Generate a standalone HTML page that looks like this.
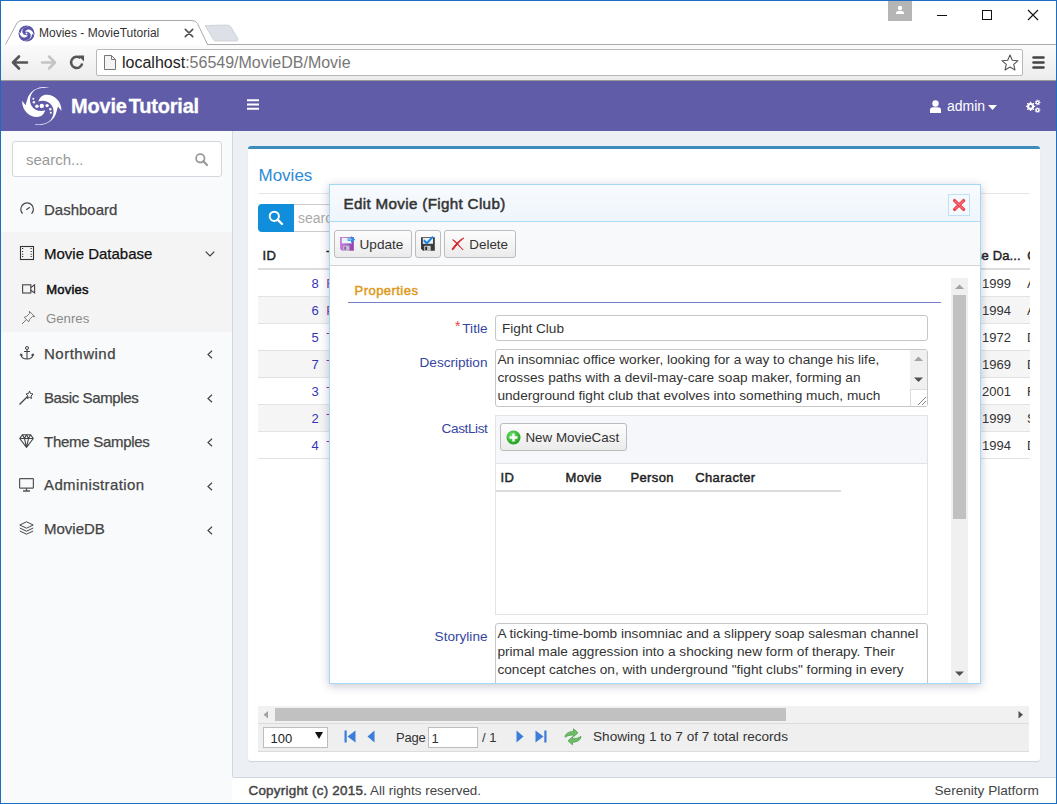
<!DOCTYPE html>
<html><head><meta charset="utf-8">
<style>
*{box-sizing:border-box;margin:0;padding:0}
html,body{width:1057px;height:804px;overflow:hidden;background:#fff}
body{position:relative;font-family:"Liberation Sans",sans-serif;color:#333}
.a{position:absolute}
.t{position:absolute;line-height:1;white-space:nowrap}
svg{position:absolute;overflow:visible}
</style></head><body>

<!-- ============ CHROME ============ -->
<div class="a" style="left:0;top:0;width:1057px;height:45px;background:#fff"></div>
<!-- tab -->
<svg style="left:0;top:0" width="260" height="46">
  <path d="M5.5 44.5 L17 23 Q19 20.5 22 20.5 L192 20.5 Q196 20.5 197.5 23.5 L207.5 44.5" fill="#fff" stroke="#a9a9a9" stroke-width="1"/>
  <path d="M207 44.5 L1057 44.5" stroke="#a9a9a9"/>
  <path d="M206 25.5 Q204 25 206 27 L214 40.5 Q215 41 217 41 L236 41 Q239 41 237.5 38 L231 27 Q229.5 25 227 25 Z" fill="#dde1e7" stroke="#c9cdd3" stroke-width="0.8"/>
</svg>
<!-- favicon -->
<svg style="left:17.5px;top:25px" width="17" height="17" viewBox="0 0 17 17"><circle cx="8.5" cy="8.5" r="8" fill="#5b55a9"/><g transform="translate(8.5 8.5) scale(0.36) translate(-23.8 -21.9)"><use href="#sw"/><use href="#sw" transform="rotate(180 23.8 21.9)"/><circle cx="23.8" cy="21.9" r="2.6" fill="#fff"/></g></svg>
<div class="t" style="left:39px;top:27px;font-size:12px;color:#333">Movies - MovieTutorial</div>
<svg style="left:184px;top:28px" width="10" height="10"><path d="M1.3 1.3 L8.7 8.7 M8.7 1.3 L1.3 8.7" stroke="#555" stroke-width="1.7" stroke-linecap="round"/></svg>

<!-- window controls -->
<div class="a" style="left:888px;top:1px;width:24px;height:20px;background:#b5b5b5"></div>
<svg style="left:894px;top:4px" width="12" height="12"><circle cx="6" cy="3.9" r="2.2" fill="#fff"/><path d="M1.8 10.1 Q1.8 6.8 6 6.8 Q10.2 6.8 10.2 10.1Z" fill="#fff"/></svg>
<div class="a" style="left:937px;top:15px;width:10px;height:1px;background:#111"></div>
<div class="a" style="left:982px;top:10px;width:10px;height:10px;border:1px solid #111"></div>
<svg style="left:1028px;top:10px" width="10" height="10"><path d="M0 0 L10 10 M10 0 L0 10" stroke="#111" stroke-width="1.1"/></svg>

<!-- toolbar -->
<div class="a" style="left:0;top:45px;width:1057px;height:35px;background:linear-gradient(#fbfbfb,#ececec)"></div>
<div class="a" style="left:0;top:80px;width:1057px;height:1px;background:#9a9a9a"></div>
<!-- back -->
<svg style="left:11px;top:55px" width="17" height="15"><path d="M8 1.5 L2 7.5 L8 13.5 M2.5 7.5 L16 7.5" fill="none" stroke="#555" stroke-width="2.6" stroke-linecap="round" stroke-linejoin="round"/></svg>
<svg style="left:40px;top:55px" width="17" height="15"><path d="M9 1.5 L15 7.5 L9 13.5 M14.5 7.5 L2 7.5" fill="none" stroke="#c4c4c4" stroke-width="2.5" stroke-linecap="round" stroke-linejoin="round"/></svg>
<svg style="left:69px;top:54px" width="17" height="17"><path d="M13.2 9.5 A5.6 5.6 0 1 1 11.5 4.2" fill="none" stroke="#555" stroke-width="2.5"/><path d="M9 1.5 L15 1.5 L15 7.5Z" fill="#555"/></svg>
<!-- address bar -->
<div class="a" style="left:96px;top:49px;width:927px;height:27px;background:#fff;border:1px solid #b9b9b9;border-radius:2px"></div>
<svg style="left:104px;top:55px" width="12" height="15"><path d="M0.5 0.5 L7.5 0.5 L11.5 4.5 L11.5 14.5 L0.5 14.5Z" fill="#f4f4f4" stroke="#777"/><path d="M7.5 0.5 L7.5 4.5 L11.5 4.5" fill="none" stroke="#777"/></svg>
<div class="t" style="left:122px;top:54.5px;font-size:16px;color:#222">localhost<span style="color:#777">:56549/MovieDB/Movie</span></div>
<svg style="left:1001px;top:54px" width="18" height="17"><path d="M9 1 L11.3 6.2 L17 6.7 L12.7 10.4 L14 16 L9 13 L4 16 L5.3 10.4 L1 6.7 L6.7 6.2Z" fill="none" stroke="#555" stroke-width="1.1" stroke-linejoin="round"/></svg>
<svg style="left:1032px;top:56px" width="13" height="13"><path d="M1.5 1.5 H11.5 M1.5 6.5 H11.5 M1.5 11.5 H11.5" stroke="#444" stroke-width="2.6" stroke-linecap="round"/></svg>

<!-- ============ NAVBAR ============ -->
<div class="a" style="left:1px;top:81px;width:1055px;height:50px;background:#605ca8"></div>
<svg style="left:18px;top:84px" width="48" height="44" viewBox="0 0 48 44">
  <g id="sw"><path d="M31.5 3.8 C24 1.2 14 4.5 10.3 12.5 C9 15.5 8.5 18.5 7.6 21.2 L4.1 16.8 C4 26 10.5 33 19 33 C23 33 26 30.5 27.2 26.3 C22 28.2 16.5 26.2 13.8 22.2 C11 18 11.5 11.5 15.5 7.3 C19.5 3.6 25 3.4 31.5 3.8Z" fill="#fff"/></g>
  <use href="#sw" transform="rotate(180 23.8 21.9)"/>
  <circle cx="23.8" cy="21.9" r="2.2" fill="#fff"/><circle cx="18.9" cy="22.2" r="1.8" fill="#fff"/><circle cx="29.1" cy="21.6" r="1.7" fill="#fff"/>
  <circle cx="15.9" cy="18.3" r="1.2" fill="#fff"/><circle cx="15.3" cy="14.8" r="1" fill="#fff"/><circle cx="32.3" cy="25.2" r="1.2" fill="#fff"/><circle cx="32.8" cy="28.7" r="1" fill="#fff"/>
</svg>
<div class="t" style="left:71px;top:96px;font-size:20px;font-weight:bold;color:#fff;letter-spacing:-0.2px;-webkit-text-stroke:0.3px #fff"><span style="margin-right:2px">Movie</span>Tutorial</div>
<svg style="left:247px;top:99px" width="12" height="11"><path d="M0 1.2 H12 M0 5.5 H12 M0 9.8 H12" stroke="#fff" stroke-width="2"/></svg>
<svg style="left:930px;top:99.5px" width="11" height="13"><circle cx="5.5" cy="3.5" r="3.2" fill="#fff"/><path d="M0 13 L0 10 Q0 7.3 3 7.3 L8 7.3 Q11 7.3 11 10 L11 13Z" fill="#fff"/></svg>
<div class="t" style="left:947px;top:98.5px;font-size:14px;color:#fff">admin</div>
<svg style="left:988px;top:105px" width="9" height="6"><path d="M0 0 H9 L4.5 5Z" fill="#fff"/></svg>
<svg style="left:1026px;top:99px" width="15" height="15" viewBox="0 0 15 15"><path fill-rule="evenodd" d="M8.13 6.70 L9.27 6.85 L9.27 7.95 L8.13 8.10 L7.59 9.40 L8.29 10.31 L7.51 11.09 L6.60 10.39 L5.30 10.93 L5.15 12.07 L4.05 12.07 L3.90 10.93 L2.60 10.39 L1.69 11.09 L0.91 10.31 L1.61 9.40 L1.07 8.10 L-0.07 7.95 L-0.07 6.85 L1.07 6.70 L1.61 5.40 L0.91 4.49 L1.69 3.71 L2.60 4.41 L3.90 3.87 L4.05 2.73 L5.15 2.73 L5.30 3.87 L6.60 4.41 L7.51 3.71 L8.29 4.49 L7.59 5.40Z M6.00 7.40 A1.4 1.4 0 1 0 3.20 7.40 A1.4 1.4 0 1 0 6.00 7.40Z M13.65 3.03 L14.47 3.11 L14.47 3.89 L13.65 3.97 L13.24 4.81 L13.70 5.50 L13.09 5.99 L12.51 5.39 L11.60 5.60 L11.34 6.39 L10.58 6.22 L10.69 5.39 L9.96 4.81 L9.18 5.10 L8.84 4.40 L9.55 3.97 L9.55 3.03 L8.84 2.60 L9.18 1.90 L9.96 2.19 L10.69 1.61 L10.58 0.78 L11.34 0.61 L11.60 1.40 L12.51 1.61 L13.09 1.01 L13.70 1.50 L13.24 2.19Z M12.40 3.50 A0.8 0.8 0 1 0 10.80 3.50 A0.8 0.8 0 1 0 12.40 3.50Z M13.65 10.63 L14.47 10.71 L14.47 11.49 L13.65 11.57 L13.24 12.41 L13.70 13.10 L13.09 13.59 L12.51 12.99 L11.60 13.20 L11.34 13.99 L10.58 13.82 L10.69 12.99 L9.96 12.41 L9.18 12.70 L8.84 12.00 L9.55 11.57 L9.55 10.63 L8.84 10.20 L9.18 9.50 L9.96 9.79 L10.69 9.21 L10.58 8.38 L11.34 8.21 L11.60 9.00 L12.51 9.21 L13.09 8.61 L13.70 9.10 L13.24 9.79Z M12.40 11.10 A0.8 0.8 0 1 0 10.80 11.10 A0.8 0.8 0 1 0 12.40 11.10Z" fill="#fff"/></svg>

<!-- ============ SIDEBAR ============ -->
<div class="a" style="left:1px;top:131px;width:231px;height:672px;background:#f9fafc"></div>
<div class="a" style="left:232px;top:131px;width:1px;height:646px;background:#d2d6de"></div>
<div class="a" style="left:1px;top:232px;width:231px;height:100px;background:#f4f4f5"></div>
<div class="a" style="left:12px;top:141px;width:210px;height:36px;background:#fff;border:1px solid #d2d6de;border-radius:3px"></div>
<div class="t" style="left:26px;top:152px;font-size:15px;color:#999">search...</div>
<svg style="left:195px;top:153px" width="13" height="13"><circle cx="5.3" cy="5.3" r="4.2" fill="none" stroke="#999" stroke-width="1.8"/><path d="M8.3 8.3 L12 12" stroke="#999" stroke-width="2.2" stroke-linecap="round"/></svg>

<!-- Dashboard -->
<svg style="left:19px;top:201px" width="16" height="16" viewBox="0 0 16 16"><path d="M3.6 12.6 A6.3 6.3 0 1 1 12.6 12.6" fill="none" stroke="#444" stroke-width="1.2"/><path d="M7.6 8.4 L10.5 6.6" stroke="#444" stroke-width="1.2" stroke-linecap="round"/></svg>
<div class="t" style="left:44px;top:202px;font-size:15px;color:#444;-webkit-text-stroke:0.25px #444">Dashboard</div>

<!-- Movie Database -->
<svg style="left:20px;top:246px" width="14" height="14" viewBox="0 0 14 14"><rect x="0.5" y="0.5" width="13" height="13" fill="none" stroke="#333" stroke-width="1.1"/><path d="M2.6 2 V3 M2.6 5 V6 M2.6 7.7 V8.7 M2.6 10.1 V11.1 M11.2 2 V3 M11.2 5 V6 M11.2 7.7 V8.7 M11.2 10.1 V11.1" stroke="#333" stroke-width="1.2"/></svg>
<div class="t" style="left:44px;top:246.3px;font-size:15px;color:#111;-webkit-text-stroke:0.25px #111">Movie Database</div>
<svg style="left:205px;top:251px" width="10" height="6"><path d="M0.7 0.7 L5 5 L9.3 0.7" fill="none" stroke="#444" stroke-width="1.2"/></svg>

<svg style="left:22px;top:284px" width="14" height="11" viewBox="0 0 14 11"><rect x="0.6" y="0.8" width="8.2" height="8.2" fill="none" stroke="#444" stroke-width="1.1"/><path d="M8.8 3.5 L12.6 0.8 V9 L8.8 6.3" fill="none" stroke="#444" stroke-width="1.1"/></svg>
<div class="t" style="left:46.3px;top:283.2px;font-size:13px;color:#111;-webkit-text-stroke:0.5px #111;letter-spacing:0.2px">Movies</div>
<svg style="left:21px;top:310px" width="15" height="15" viewBox="0 0 15 15"><path d="M1 14 L5.3 9.7" stroke="#777" stroke-width="1"/><path d="M3.2 7.3 L5.6 6.4 L8.6 3.4 L8.3 1.2 L13.8 6.7 L11.6 6.4 L8.6 9.4 L7.7 11.8Z" fill="none" stroke="#777" stroke-width="1" stroke-linejoin="round"/></svg>
<div class="t" style="left:46px;top:311.5px;font-size:13.2px;color:#8a8a8a">Genres</div>

<!-- other groups -->
<svg style="left:20px;top:346px" width="14" height="14" viewBox="0 0 14 14"><circle cx="7" cy="2" r="1.5" fill="none" stroke="#444"/><path d="M7 3.5 V13 M4 5.5 H10 M1 8.5 Q1.5 13 7 13 Q12.5 13 13 8.5 M0 9.5 L1 8 L2.5 9.5 M11.5 9.5 L13 8 L14 9.5" fill="none" stroke="#444" stroke-width="1.1"/></svg>
<div class="t" style="left:44px;top:345.6px;font-size:15px;color:#444;-webkit-text-stroke:0.25px #444;letter-spacing:0.5px">Northwind</div>
<svg style="left:207px;top:350px" width="6" height="9"><path d="M5 0.7 L1 4.5 L5 8.3" fill="none" stroke="#444" stroke-width="1.2"/></svg>

<svg style="left:19px;top:390px" width="15" height="15" viewBox="0 0 15 15"><path d="M0.5 14.5 L8.5 6.5" stroke="#444" stroke-width="1.2"/><path d="M10.5 1 L11.5 3.5 L14 4 L12 6 L12.5 8.5 L10.5 7.3 L8.5 8.5 L9 6 L7 4 L9.5 3.5Z" fill="none" stroke="#444" stroke-width="1"/></svg>
<div class="t" style="left:44px;top:389.8px;font-size:15px;color:#444;-webkit-text-stroke:0.25px #444;letter-spacing:-0.38px">Basic Samples</div>
<svg style="left:207px;top:394px" width="6" height="9"><path d="M5 0.7 L1 4.5 L5 8.3" fill="none" stroke="#444" stroke-width="1.2"/></svg>

<svg style="left:19px;top:434px" width="15" height="14" viewBox="0 0 15 14"><path d="M3.5 0.7 H11.5 L14.3 4.5 L7.5 13.3 L0.7 4.5Z M0.7 4.5 H14.3 M3.5 0.7 L5.5 4.5 L7.5 13.3 L9.5 4.5 L11.5 0.7 M5.5 4.5 L7.5 0.7 L9.5 4.5" fill="none" stroke="#444" stroke-width="1.1" stroke-linejoin="round"/></svg>
<div class="t" style="left:44px;top:433.7px;font-size:15px;color:#444;-webkit-text-stroke:0.25px #444;letter-spacing:-0.28px">Theme Samples</div>
<svg style="left:207px;top:438px" width="6" height="9"><path d="M5 0.7 L1 4.5 L5 8.3" fill="none" stroke="#444" stroke-width="1.2"/></svg>

<svg style="left:19px;top:478px" width="15" height="14" viewBox="0 0 15 14"><rect x="0.6" y="0.6" width="13.8" height="9.5" rx="0.5" fill="none" stroke="#555" stroke-width="1.2"/><path d="M7.5 10 V12.5 M4 13 H11" stroke="#555" stroke-width="1.3"/></svg>
<div class="t" style="left:44px;top:477.3px;font-size:15px;color:#444;-webkit-text-stroke:0.25px #444;letter-spacing:0.38px">Administration</div>
<svg style="left:207px;top:482px" width="6" height="9"><path d="M5 0.7 L1 4.5 L5 8.3" fill="none" stroke="#444" stroke-width="1.2"/></svg>

<svg style="left:19px;top:521px" width="15" height="15" viewBox="0 0 15 15"><path d="M7.5 0.8 L14.2 4 L7.5 7.2 L0.8 4Z" fill="none" stroke="#444" stroke-width="1"/><path d="M0.8 7 L7.5 10.2 L14.2 7 M0.8 10 L7.5 13.2 L14.2 10" fill="none" stroke="#444" stroke-width="1"/></svg>
<div class="t" style="left:44px;top:521.3px;font-size:15px;color:#444;-webkit-text-stroke:0.25px #444">MovieDB</div>
<svg style="left:207px;top:526px" width="6" height="9"><path d="M5 0.7 L1 4.5 L5 8.3" fill="none" stroke="#444" stroke-width="1.2"/></svg>


<!-- ============ CONTENT ============ -->
<div class="a" style="left:233px;top:131px;width:823px;height:646px;background:#ecf0f5"></div>
<div class="a" style="left:248px;top:146px;width:792px;height:615px;background:#fff;border-top:3px solid #3c8dbc;border-radius:3px;box-shadow:0 1px 1px rgba(0,0,0,0.12)"></div>
<div class="t" style="left:258.5px;top:167.4px;font-size:17px;color:#2e8bd6">Movies</div>
<div class="a" style="left:258px;top:193px;width:772px;height:1px;background:#e6e6e6"></div>
<div class="a" style="left:258px;top:204px;width:36px;height:28px;background:#108ddb;border-radius:4px 0 0 4px"></div>
<svg style="left:268px;top:210px" width="16" height="16"><circle cx="6.3" cy="6.3" r="4.6" fill="none" stroke="#fff" stroke-width="2"/><path d="M9.6 9.6 L14 14" stroke="#fff" stroke-width="2.4" stroke-linecap="round"/></svg>
<div class="a" style="left:294px;top:204px;width:100px;height:28px;background:#fff;border:1px solid #ccc;border-left:0"></div>
<div class="t" style="left:298px;top:211px;font-size:14px;color:#aaa">search</div>

<!-- grid -->
<div class="t" style="left:262.5px;top:249px;font-size:13px;color:#222;-webkit-text-stroke:0.45px #222;letter-spacing:0.35px">ID</div>
<div class="t" style="left:326.3px;top:249px;font-size:13px;color:#222;-webkit-text-stroke:0.45px #222;letter-spacing:0.35px">Title</div>
<div class="a" style="left:944px;top:249px;width:86px;height:16px;overflow:hidden"><div class="t" style="left:31px;top:0;font-size:13px;color:#222;-webkit-text-stroke:0.45px #222;letter-spacing:0.1px">se Da...</div><div class="t" style="left:83.2px;top:0;font-size:13px;color:#222;-webkit-text-stroke:0.45px #222">C</div></div>
<div class="a" style="left:258px;top:268px;width:772px;height:2px;background:#ddd"></div>
<div id="rows"></div>
<div class="a" style="left:258px;top:270px;width:772px;height:26px;background:#fff"></div>
<div class="a" style="left:258px;top:296px;width:772px;height:1px;background:#e3e3e3"></div>
<div class="t" style="left:268.7px;top:276.5px;width:50px;text-align:right;font-size:13px;color:#3434b8">8</div>
<div class="t" style="left:326.3px;top:276.5px;font-size:13px;color:#7a3aa0">F</div>
<div class="t" style="left:982px;top:276.5px;font-size:13px;color:#333">1999</div>
<div class="t" style="left:1027px;top:276.5px;width:3px;overflow:hidden;font-size:13px;color:#333">A</div>
<div class="a" style="left:258px;top:297px;width:772px;height:26px;background:#f5f5f5"></div>
<div class="a" style="left:258px;top:323px;width:772px;height:1px;background:#e3e3e3"></div>
<div class="t" style="left:268.7px;top:303.5px;width:50px;text-align:right;font-size:13px;color:#3434b8">6</div>
<div class="t" style="left:326.3px;top:303.5px;font-size:13px;color:#7a3aa0">P</div>
<div class="t" style="left:982px;top:303.5px;font-size:13px;color:#333">1994</div>
<div class="t" style="left:1027px;top:303.5px;width:3px;overflow:hidden;font-size:13px;color:#333">A</div>
<div class="a" style="left:258px;top:324px;width:772px;height:26px;background:#fff"></div>
<div class="a" style="left:258px;top:350px;width:772px;height:1px;background:#e3e3e3"></div>
<div class="t" style="left:268.7px;top:330.5px;width:50px;text-align:right;font-size:13px;color:#3434b8">5</div>
<div class="t" style="left:326.3px;top:330.5px;font-size:13px;color:#7a3aa0">T</div>
<div class="t" style="left:982px;top:330.5px;font-size:13px;color:#333">1972</div>
<div class="t" style="left:1027px;top:330.5px;width:3px;overflow:hidden;font-size:13px;color:#333">D</div>
<div class="a" style="left:258px;top:351px;width:772px;height:26px;background:#f5f5f5"></div>
<div class="a" style="left:258px;top:377px;width:772px;height:1px;background:#e3e3e3"></div>
<div class="t" style="left:268.7px;top:357.5px;width:50px;text-align:right;font-size:13px;color:#3434b8">7</div>
<div class="t" style="left:326.3px;top:357.5px;font-size:13px;color:#7a3aa0">T</div>
<div class="t" style="left:982px;top:357.5px;font-size:13px;color:#333">1969</div>
<div class="t" style="left:1027px;top:357.5px;width:3px;overflow:hidden;font-size:13px;color:#333">D</div>
<div class="a" style="left:258px;top:378px;width:772px;height:26px;background:#fff"></div>
<div class="a" style="left:258px;top:404px;width:772px;height:1px;background:#e3e3e3"></div>
<div class="t" style="left:268.7px;top:384.5px;width:50px;text-align:right;font-size:13px;color:#3434b8">3</div>
<div class="t" style="left:326.3px;top:384.5px;font-size:13px;color:#7a3aa0">T</div>
<div class="t" style="left:982px;top:384.5px;font-size:13px;color:#333">2001</div>
<div class="t" style="left:1027px;top:384.5px;width:3px;overflow:hidden;font-size:13px;color:#333">F</div>
<div class="a" style="left:258px;top:405px;width:772px;height:26px;background:#f5f5f5"></div>
<div class="a" style="left:258px;top:431px;width:772px;height:1px;background:#e3e3e3"></div>
<div class="t" style="left:268.7px;top:411.5px;width:50px;text-align:right;font-size:13px;color:#3434b8">2</div>
<div class="t" style="left:326.3px;top:411.5px;font-size:13px;color:#7a3aa0">T</div>
<div class="t" style="left:982px;top:411.5px;font-size:13px;color:#333">1999</div>
<div class="t" style="left:1027px;top:411.5px;width:3px;overflow:hidden;font-size:13px;color:#333">S</div>
<div class="a" style="left:258px;top:432px;width:772px;height:26px;background:#fff"></div>
<div class="a" style="left:258px;top:458px;width:772px;height:1px;background:#e3e3e3"></div>
<div class="t" style="left:268.7px;top:438.5px;width:50px;text-align:right;font-size:13px;color:#3434b8">4</div>
<div class="t" style="left:326.3px;top:438.5px;font-size:13px;color:#7a3aa0">T</div>
<div class="t" style="left:982px;top:438.5px;font-size:13px;color:#333">1994</div>
<div class="t" style="left:1027px;top:438.5px;width:3px;overflow:hidden;font-size:13px;color:#333">D</div>

<!-- hscroll -->
<div class="a" style="left:258px;top:706px;width:771px;height:17px;background:#f1f1f1"></div>
<svg style="left:263px;top:711px" width="6" height="8"><path d="M5 0 V7.5 L0.5 3.75Z" fill="#a3a3a3"/></svg>
<div class="a" style="left:275px;top:708px;width:511px;height:13px;background:#c1c1c1"></div>
<svg style="left:1018px;top:711px" width="6" height="8"><path d="M0.5 0 V7.5 L5 3.75Z" fill="#505050"/></svg>
<!-- pager -->
<div class="a" style="left:258px;top:723px;width:771px;height:29px;background:#efefef;border-top:1px solid #dcdcdc;border-bottom:1px solid #dcdcdc"></div>
<div class="a" style="left:263px;top:727px;width:65px;height:21px;background:#fff;border:1px solid #bdbdbd"></div>
<div class="t" style="left:270.5px;top:731.5px;font-size:13px;color:#222">100</div>
<svg style="left:315px;top:732px" width="8" height="7"><path d="M0 0 H8 L4 7Z" fill="#111"/></svg>
<svg style="left:344px;top:730px" width="12" height="13"><rect x="0.5" y="0.5" width="2.2" height="12" fill="#3b7dd8"/><path d="M11.5 0.5 V12.5 L3.5 6.5Z" fill="#3b7dd8"/></svg>
<svg style="left:367px;top:730px" width="8" height="13"><path d="M7.5 0.5 V12.5 L0.5 6.5Z" fill="#3b7dd8"/></svg>
<div class="t" style="left:396px;top:731.4px;font-size:13px;color:#333;letter-spacing:-0.2px">Page</div>
<div class="a" style="left:428px;top:727px;width:50px;height:21px;background:#fff;border:1px solid #bdbdbd"></div>
<div class="t" style="left:431.5px;top:731.5px;font-size:13px;color:#333">1</div>
<div class="t" style="left:482px;top:731.4px;font-size:13px;color:#333">/ 1</div>
<svg style="left:516px;top:730px" width="8" height="13"><path d="M0.5 0.5 V12.5 L7.5 6.5Z" fill="#3b7dd8"/></svg>
<svg style="left:535px;top:730px" width="12" height="13"><path d="M0.5 0.5 V12.5 L8.5 6.5Z" fill="#3b7dd8"/><rect x="9.3" y="0.5" width="2.2" height="12" fill="#3b7dd8"/></svg>
<svg style="left:564px;top:728px" width="18" height="18" viewBox="0 0 18 18"><g id="ra"><path d="M1 9.2 C1.5 5.5 4.5 3.6 9.5 3.4 L9.5 0.8 L14 4.8 L9.5 8.8 L9.5 6.9 C6 6.9 3.5 7.6 1 9.2Z" fill="#6fbf6a" stroke="#3d963a" stroke-width="0.7" stroke-linejoin="round"/></g><use href="#ra" transform="rotate(180 9 8.8)"/></svg>
<div class="t" style="left:593px;top:730.4px;font-size:13.6px;color:#333">Showing 1 to 7 of 7 total records</div>

<!-- footer -->
<div class="a" style="left:233px;top:777px;width:823px;height:26px;background:#fff;border-top:1px solid #d2d6de"></div>
<div class="t" style="left:248.5px;top:783.8px;font-size:13.4px;color:#444"><span style="-webkit-text-stroke:0.45px #444;letter-spacing:0.25px">Copyright (c) 2015.</span> All rights reserved.</div>
<div class="t" style="left:934.5px;top:783.8px;font-size:13.6px;color:#444">Serenity Platform</div>


<!-- ============ DIALOG ============ -->
<div class="a" style="left:329px;top:184px;width:652px;height:500px;background:#fff;border:1px solid #a3d9f4;box-shadow:0 2px 9px rgba(50,45,90,0.28)"></div>
<div class="a" style="left:330px;top:185px;width:650px;height:37px;background:linear-gradient(#f8fbfe,#eef5fc);border-bottom:1px solid #abdcf5"></div>
<div class="t" style="left:343.5px;top:195.9px;font-size:15.2px;color:#333;letter-spacing:0.33px;-webkit-text-stroke:0.5px #333">Edit Movie (Fight Club)</div>
<div class="a" style="left:948px;top:194px;width:22px;height:22px;border:1px solid #bfe1f8;background:#f4f9fd"></div>
<svg style="left:951px;top:197px" width="16" height="16" viewBox="0 0 16 16"><path d="M3.6 3.6 L12.6 12.4 M12.6 3.6 L3.6 12.4" stroke="#ec3d48" stroke-width="3.3" stroke-linecap="round"/><path d="M4 4 L12.2 12 M12.2 4 L4 12" stroke="#f7727a" stroke-width="1.1" stroke-linecap="round"/></svg>

<!-- toolbar -->
<div class="a" style="left:330px;top:222px;width:650px;height:44px;background:#f8f9fb;border-bottom:1px solid #d4d4d4"></div>
<div class="a" style="left:334px;top:230px;width:78px;height:28px;background:linear-gradient(#fdfdfd,#ebebeb);border:1px solid #bcbcbc;border-radius:3px"></div>
<div class="a" style="left:415px;top:230px;width:26px;height:28px;background:linear-gradient(#fdfdfd,#ebebeb);border:1px solid #bcbcbc;border-radius:3px"></div>
<div class="a" style="left:444px;top:230px;width:72px;height:28px;background:linear-gradient(#fdfdfd,#ebebeb);border:1px solid #bcbcbc;border-radius:3px"></div>
<!-- update icon -->
<svg style="left:340px;top:236px" width="16" height="16" viewBox="0 0 16 16"><defs><linearGradient id="pu" x1="0" x2="1"><stop offset="0" stop-color="#c77fe0"/><stop offset="1" stop-color="#8e3fb0"/></linearGradient></defs><path d="M0 1 H13.8 V14.8 H2 L0 12.8Z" fill="url(#pu)"/><rect x="1.8" y="1.8" width="10.2" height="5.6" fill="#e9f5f3"/><rect x="3.2" y="9.6" width="6.2" height="5.2" fill="#c4c4c8"/><rect x="4.3" y="10.6" width="1.8" height="3.2" fill="#9b4fc0"/><path d="M7.6 3.6 H12.2" stroke="#2d8be0" stroke-width="2.4"/><path d="M11 0 L15.2 3.6 L11 7.2Z" fill="#2d8be0"/><path d="M8 3.6 H12" stroke="#8fd6ff" stroke-width="0.8"/></svg>
<div class="t" style="left:359.5px;top:237.8px;font-size:13.6px;color:#333">Update</div>
<!-- save icon -->
<svg style="left:421px;top:236px" width="15" height="16" viewBox="0 0 15 16"><path d="M0 1.2 H13.8 V14.8 H2 L0 12.8Z" fill="#3a3a3a"/><rect x="1.8" y="2" width="10.2" height="5.8" fill="#e6f1f0"/><rect x="3.2" y="9.8" width="6.5" height="5" fill="#c9c9cf"/><rect x="4.3" y="10.8" width="1.8" height="3.2" fill="#222"/><path d="M2.8 4.2 L5.8 7.3 L12 0.6" fill="none" stroke="#1f82e8" stroke-width="2"/></svg>
<!-- delete icon -->
<svg style="left:450px;top:237px" width="15" height="15" viewBox="0 0 15 15"><path d="M1.8 2.8 C3 2 4 2.3 5.5 4 L13.5 12.8 L12.8 13.2 L4.5 5 C3.5 4 2.5 3.5 1.8 2.8Z" fill="#d32a2e"/><path d="M13.8 1 C10 2.5 7 5.5 2.2 11.8 C2 12.6 2.6 13.2 3.2 12.6 C7 7.5 10 4 13.8 1Z" fill="#d51f24" stroke="#d51f24" stroke-width="0.9"/></svg>
<div class="t" style="left:469.3px;top:237.9px;font-size:13.4px;color:#333">Delete</div>

<!-- body -->
<div class="a" style="left:330px;top:266px;width:650px;height:417px;overflow:hidden">
 <div style="position:absolute;left:-330px;top:-266px;width:1057px;height:804px">
  <div class="t" style="left:354.6px;top:284px;font-size:13px;color:#de9a1e;-webkit-text-stroke:0.5px #de9a1e;letter-spacing:0.45px">Properties</div>
  <div class="a" style="left:348px;top:302px;width:593px;height:1px;background:#7480c8"></div>

  <div class="t" style="left:455px;top:319px;font-size:14px;color:#e8434a">*</div>
  <div class="t" style="left:387.5px;top:321.9px;width:100px;text-align:right;font-size:13.6px;color:#3646a0">Title</div>
  <div class="a" style="left:495px;top:315px;width:433px;height:26px;border:1px solid #c6c6c6;border-radius:3px;background:#fff"></div>
  <div class="t" style="left:502px;top:321.5px;font-size:13.6px;color:#333">Fight Club</div>

  <div class="t" style="left:387.5px;top:355.9px;width:100px;text-align:right;font-size:13.6px;color:#3646a0">Description</div>
  <div class="a" style="left:495px;top:349px;width:433px;height:58px;border:1px solid #c6c6c6;border-radius:3px;background:#fff"></div>
  <div class="a" style="left:497.4px;top:351.2px;width:410px;font-size:13.65px;line-height:17.9px;color:#333;white-space:nowrap">An insomniac office worker, looking for a way to change his life,<br>crosses paths with a devil-may-care soap maker, forming an<br>underground fight club that evolves into something much, much</div>
  <div class="a" style="left:910px;top:350px;width:17px;height:39px;background:#f0f0f0"></div>
  <svg style="left:914px;top:356px" width="9" height="6"><path d="M0 5 H9 L4.5 0.5Z" fill="#a3a3a3"/></svg>
  <svg style="left:914px;top:377px" width="9" height="6"><path d="M0 0.5 H9 L4.5 5Z" fill="#505050"/></svg>
  <div class="a" style="left:910px;top:389px;width:17px;height:17px;background:#fff;border-top:1px solid #dcdcdc;border-left:1px solid #dcdcdc"></div>
  <svg style="left:917px;top:396px" width="10" height="10"><path d="M1 9 L9 1 M5 9 L9 5" stroke="#777" stroke-width="0.9"/></svg>

  <div class="t" style="left:387.5px;top:421.6px;width:100px;text-align:right;font-size:13.6px;color:#3646a0;letter-spacing:-0.4px">CastList</div>
  <div class="a" style="left:495px;top:415px;width:433px;height:200px;border:1px solid #e3e3e3;background:#fff"></div>
  <div class="a" style="left:496px;top:416px;width:431px;height:48px;background:#f6f7fa;border-bottom:1px solid #e3e3e3"></div>
  <div class="a" style="left:500px;top:423px;width:127px;height:28px;background:linear-gradient(#fdfdfd,#ebebeb);border:1px solid #bcbcbc;border-radius:3px"></div>
  <svg style="left:505.5px;top:429.5px" width="15" height="15" viewBox="0 0 15 15"><defs><radialGradient id="gp" cx="0.4" cy="0.35" r="0.7"><stop offset="0" stop-color="#6ee36e"/><stop offset="1" stop-color="#1a9a1a"/></radialGradient></defs><circle cx="7.5" cy="7.5" r="7" fill="url(#gp)"/><path d="M7.5 3.5 V11.5 M3.5 7.5 H11.5" stroke="#fff" stroke-width="2.4"/></svg>
  <div class="t" style="left:525.4px;top:430.5px;font-size:13.4px;color:#333">New MovieCast</div>
  <div class="t" style="left:500.5px;top:470.5px;font-size:13px;color:#222;-webkit-text-stroke:0.45px #222;letter-spacing:0.35px">ID</div>
  <div class="t" style="left:565.5px;top:470.5px;font-size:13px;color:#222;-webkit-text-stroke:0.45px #222;letter-spacing:0.35px">Movie</div>
  <div class="t" style="left:630.5px;top:470.5px;font-size:13px;color:#222;-webkit-text-stroke:0.45px #222;letter-spacing:0.35px">Person</div>
  <div class="t" style="left:695.3px;top:470.5px;font-size:13px;color:#222;-webkit-text-stroke:0.45px #222;letter-spacing:0.35px">Character</div>
  <div class="a" style="left:496px;top:490px;width:345px;height:2px;background:#dcdcdc"></div>

  <div class="t" style="left:387.5px;top:629.5px;width:100px;text-align:right;font-size:13.6px;color:#3646a0">Storyline</div>
  <div class="a" style="left:495px;top:623px;width:433px;height:100px;border:1px solid #c6c6c6;border-radius:3px;background:#fff"></div>
  <div class="a" style="left:497.4px;top:625.2px;width:420px;font-size:13.65px;line-height:17.9px;color:#333;white-space:nowrap">A ticking-time-bomb insomniac and a slippery soap salesman channel<br>primal male aggression into a shocking new form of therapy. Their<br>concept catches on, with underground "fight clubs" forming in every</div>

  <!-- dialog scrollbar -->
  <div class="a" style="left:951px;top:278px;width:17px;height:410px;background:#f0f0f0"></div>
  <svg style="left:955px;top:284px" width="9" height="6"><path d="M0 5 H9 L4.5 0.5Z" fill="#a3a3a3"/></svg>
  <div class="a" style="left:953px;top:295px;width:13px;height:224px;background:#c1c1c1"></div>
  <svg style="left:955px;top:671px" width="9" height="6"><path d="M0 0.5 H9 L4.5 5Z" fill="#505050"/></svg>
 </div>
</div>


<!-- window border -->
<div class="a" style="left:0;top:0;width:1057px;height:1px;background:#1b6ec2"></div>
<div class="a" style="left:0;top:0;width:1px;height:804px;background:#1b6ec2"></div>
<div class="a" style="left:1056px;top:0;width:1px;height:804px;background:#1b6ec2"></div>
<div class="a" style="left:0;top:803px;width:1057px;height:1px;background:#1b6ec2"></div>
</body></html>
